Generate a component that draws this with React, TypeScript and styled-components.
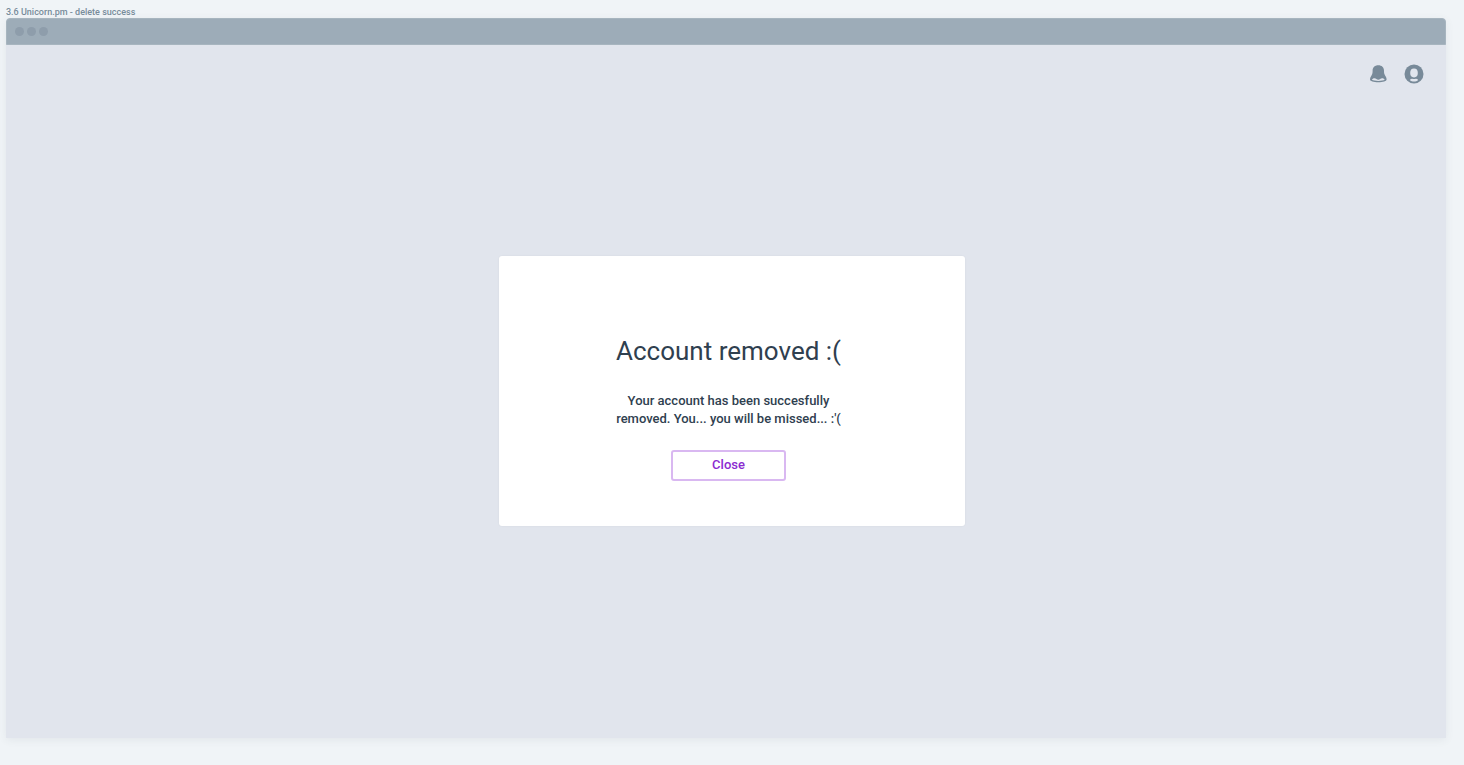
import React from "react";
import styled, { createGlobalStyle } from "styled-components";

const GlobalStyle = createGlobalStyle`
  *, *::before, *::after { box-sizing: border-box; }
  body {
    margin: 0;
    background: #f0f4f7;
    color: #2f404f;
    font-family: Roboto, "Liberation Sans", sans-serif;
  }
  h1, p { margin: 0; }
`;

const Page = styled.div`
  min-height: 100vh;
  display: flex;
  flex-direction: column;
  padding: 6px 18px 27px 6px;
`;

const FrameLabel = styled.div`
  height: 12px;
  font-size: 9px;
  line-height: 12px;
  font-weight: 500;
  color: #788c9b;
`;

const BrowserWindow = styled.section`
  flex: 1;
  display: flex;
  flex-direction: column;
  border-radius: 4px 4px 0 0;
  background: #e1e5ed;
  box-shadow: 0 2px 8px rgba(60, 80, 90, 0.08);
`;

const TitleBar = styled.div`
  height: 27px;
  display: flex;
  align-items: center;
  gap: 3px;
  padding: 0 8px;
  border: 1px solid #a7b5bf;
  border-radius: 4px 4px 0 0;
  background: #9dacb8;
`;

const WindowDot = styled.span`
  width: 9px;
  height: 9px;
  border-radius: 50%;
  background: #8e9dab;
`;

const Toolbar = styled.header`
  display: flex;
  justify-content: flex-end;
  gap: 16px;
  padding: 19px 22px 0;
`;

const IconButton = styled.button`
  width: 20px;
  height: 20px;
  padding: 0;
  border: 0;
  background: none;
  color: #788a99;
  cursor: pointer;

  svg { display: block; }
`;

const Main = styled.main`
  flex: 1;
  display: flex;
  justify-content: center;
  align-items: center;
  padding: 0 0 41px 12px;
`;

const Card = styled.div`
  width: 466px;
  display: flex;
  flex-direction: column;
  align-items: center;
  padding: 77px 7px 45px 0;
  border-radius: 3px;
  background: #fff;
  box-shadow: 0 0 2px rgba(60, 80, 90, 0.08);
  text-align: center;
`;

const Title = styled.h1`
  font-size: 26px;
  line-height: 36px;
  font-weight: 400;
`;

const Message = styled.p`
  margin: 23px 0 22px;
  font-size: 13px;
  line-height: 18px;
  font-weight: 500;
`;

const CloseButton = styled.button`
  width: 115px;
  height: 31px;
  padding: 0;
  border: 2px solid #d9b8f1;
  border-radius: 3px;
  background: #fff;
  color: #8b2bd0;
  font: 500 13px/18px Roboto, "Liberation Sans", sans-serif;
  cursor: pointer;
`;

const BellIcon = () => (
  <svg width="20" height="20" viewBox="0 0 20 20" aria-hidden="true">
    <path
      fill="currentColor"
      d="M10.300 1.200C6.800 1.200 4.600 3.400 4.600 6.700c0 1.500-.1 2.500-.5 3.500-.4 1-1.100 1.900-1.500 2.900-.4.900-.6 1.600-.6 2.400 0 1.700 3.700 2.700 8.300 2.700s8.300-1 8.300-2.700c0-.8-.2-1.500-.6-2.400-.4-1-1.100-1.900-1.500-2.900-.4-1-.5-2-.5-3.500C16 3.400 13.800 1.200 10.300 1.200z"
    />
    <path
      fill="#e1e5ed"
      d="M3.900 15.800c.4-.9 1.300-1.500 2.600-1.500 1.700 0 2.200 1.400 3.800 1.400s2.100-1.400 3.800-1.400c1.300 0 2.200.6 2.600 1.500-1.200.7-3.600 1.100-6.400 1.100s-5.200-.4-6.400-1.100z"
    />
  </svg>
);

const UserIcon = () => (
  <svg width="20" height="20" viewBox="0 0 20 20" aria-hidden="true">
    <circle cx="10" cy="10" r="9.500" fill="currentColor" />
    <ellipse cx="10" cy="9" rx="3.800" ry="4.400" fill="#e1e5ed" />
    <path
      fill="#e1e5ed"
      d="M5.800 15.900c.7-.8 1.500-1.200 2.300-1.200.6.300 1.200.4 1.900.4s1.300-.1 1.900-.4c.8 0 1.600.4 2.300 1.200-1.100 1-2.600 1.500-4.200 1.500s-3.100-.5-4.200-1.500z"
    />
  </svg>
);

export default function App() {
  return (
    <>
      <GlobalStyle />
      <Page>
        <FrameLabel>3.6 Unicorn.pm - delete success</FrameLabel>
        <BrowserWindow>
          <TitleBar>
            <WindowDot />
            <WindowDot />
            <WindowDot />
          </TitleBar>
          <Toolbar>
            <IconButton aria-label="Notifications">
              <BellIcon />
            </IconButton>
            <IconButton aria-label="Profile">
              <UserIcon />
            </IconButton>
          </Toolbar>
          <Main>
            <Card>
              <Title>Account removed :(</Title>
              <Message>
                Your account has been succesfully
                <br />
                removed. You... you will be missed... :'(
              </Message>
              <CloseButton>Close</CloseButton>
            </Card>
          </Main>
        </BrowserWindow>
      </Page>
    </>
  );
}
